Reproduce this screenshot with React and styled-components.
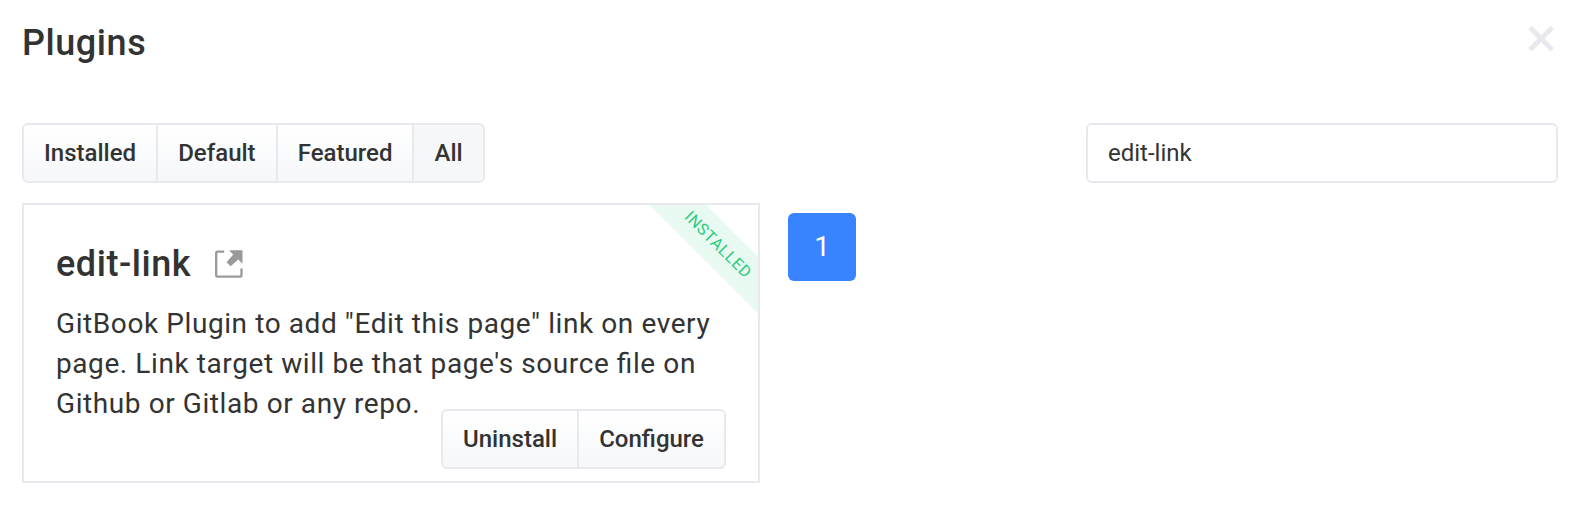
import React, { useState } from 'react';
import styled, { createGlobalStyle } from 'styled-components';

const GlobalStyle = createGlobalStyle`
  *, *::before, *::after { box-sizing: border-box; }
  body {
    margin: 0;
    background: #fff;
    color: #333;
    font-family: Roboto, "Liberation Sans", sans-serif;
    font-size: 24px;
    font-feature-settings: "liga" 1;
  }
`;

const Page = styled.main`
  height: 528px;
  padding: 23px 28px 0 22px;
  overflow: hidden;
`;

const Header = styled.header`
  display: flex;
  justify-content: space-between;
  align-items: flex-start;
  height: 100px;
`;

const Title = styled.h1`
  margin: 0;
  font-size: 36px;
  line-height: 40px;
  font-weight: 500;
  letter-spacing: 0.56px;
`;

const CloseButton = styled.button`
  display: flex;
  margin: 3px 4px 0 0;
  padding: 0;
  border: 0;
  background: none;
`;

const Toolbar = styled.div`
  display: flex;
  justify-content: space-between;
  margin-bottom: 20px;
`;

const ButtonGroup = styled.div`
  display: flex;
`;

const Button = styled.button`
  height: 60px;
  padding: 0 20.05px;
  border: 2px solid #e8e9ee;
  background: ${(p) => (p.$active ? '#f5f7f9' : 'linear-gradient(#fff, #f5f7f9)')};
  background-clip: padding-box;
  color: #333;
  font: 500 24px/52px Roboto, "Liberation Sans", sans-serif;
  letter-spacing: 0;

  & + & { margin-left: -2px; }
  &:first-child { border-radius: 6px 0 0 6px; }
  &:last-child { border-radius: 0 6px 6px 0; }
`;

const SearchInput = styled.input`
  width: 472px;
  height: 60px;
  padding: 0 20px;
  border: 2px solid #e8e9ee;
  border-radius: 6px;
  outline: 0;
  background: #fff;
  color: #333;
  font: 400 24px Roboto, "Liberation Sans", sans-serif;
`;

const Results = styled.div`
  display: flex;
  align-items: flex-start;
  gap: 28px;
`;

const Card = styled.article`
  position: relative;
  width: 738px;
  height: 280px;
  padding: 39px 32px 0;
  border: 2px solid #e8e9ee;
  overflow: hidden;
`;

const CardHeading = styled.div`
  display: flex;
  align-items: center;
  gap: 24px;
  height: 40px;
  margin-bottom: 20px;
`;

const CardTitle = styled.h2`
  margin: 0;
  font-size: 36px;
  line-height: 40px;
  font-weight: 500;
  letter-spacing: 0.56px;
`;

const ExternalLink = styled.a`
  display: flex;
  color: #999;
`;

const Description = styled.p`
  margin: 0;
  font-size: 28px;
  line-height: 40px;
  letter-spacing: 0.585px;
`;

const Ribbon = styled.span`
  position: absolute;
  top: 20.5px;
  right: -60.5px;
  width: 200px;
  height: 40px;
  padding-right: 3px;
  transform: rotate(45deg);
  background: #e7f9f0;
  color: #26cb7c;
  font-size: 16px;
  line-height: 40px;
  letter-spacing: 0.6px;
  text-align: center;
`;

const CardActions = styled.div`
  position: absolute;
  right: 32px;
  bottom: 12px;
`;

const PageButton = styled.button`
  width: 68px;
  height: 68px;
  margin-top: 10px;
  padding: 0 0 2px;
  border: 0;
  border-radius: 6px;
  background: #3884ff;
  color: #fff;
  font: 400 28px Roboto, "Liberation Sans", sans-serif;
`;

const filters = ['Installed', 'Default', 'Featured', 'All'];

function CloseIcon() {
  return (
    <svg width="26" height="26" viewBox="0 0 26 26" fill="none" stroke="#e8e9ee" strokeWidth="5">
      <path d="M2 1.5L24.3 23.8M24.3 1.5L2 23.8" />
    </svg>
  );
}

function ExternalIcon() {
  return (
    <svg width="28" height="28" viewBox="0 0 28 28">
      <path d="M9.2 1.6H2.4Q1.2 1.6 1.2 2.8V25.5Q1.2 26.7 2.4 26.7H25.3Q26.5 26.7 26.5 25.5V18.5" fill="none" stroke="currentColor" strokeWidth="2.3" />
      <path d="M14 0.3H27.5V13.8L23.3 9.6L15.6 16.2L11.6 12.2L18.3 4.6Z" fill="currentColor" />
    </svg>
  );
}

export default function App() {
  const [filter, setFilter] = useState('All');
  const [query, setQuery] = useState('edit-link');
  return (
    <Page>
      <GlobalStyle />
      <Header>
        <Title>Plugins</Title>
        <CloseButton aria-label="Close"><CloseIcon /></CloseButton>
      </Header>
      <Toolbar>
        <ButtonGroup>
          {filters.map((name) => (
            <Button key={name} $active={name === filter} onClick={() => setFilter(name)}>{name}</Button>
          ))}
        </ButtonGroup>
        <SearchInput value={query} onChange={(e) => setQuery(e.target.value)} />
      </Toolbar>
      <Results>
        <Card>
          <Ribbon>INSTALLED</Ribbon>
          <CardHeading>
            <CardTitle>edit-link</CardTitle>
            <ExternalLink href="#" aria-label="Open plugin page"><ExternalIcon /></ExternalLink>
          </CardHeading>
          <Description>
            GitBook Plugin to add "Edit this page" link on every page. Link target will be that page's source file on Github or Gitlab or any repo.
          </Description>
          <CardActions>
            <ButtonGroup>
              <Button>Uninstall</Button>
              <Button>Configure</Button>
            </ButtonGroup>
          </CardActions>
        </Card>
        <PageButton>1</PageButton>
      </Results>
    </Page>
  );
}
